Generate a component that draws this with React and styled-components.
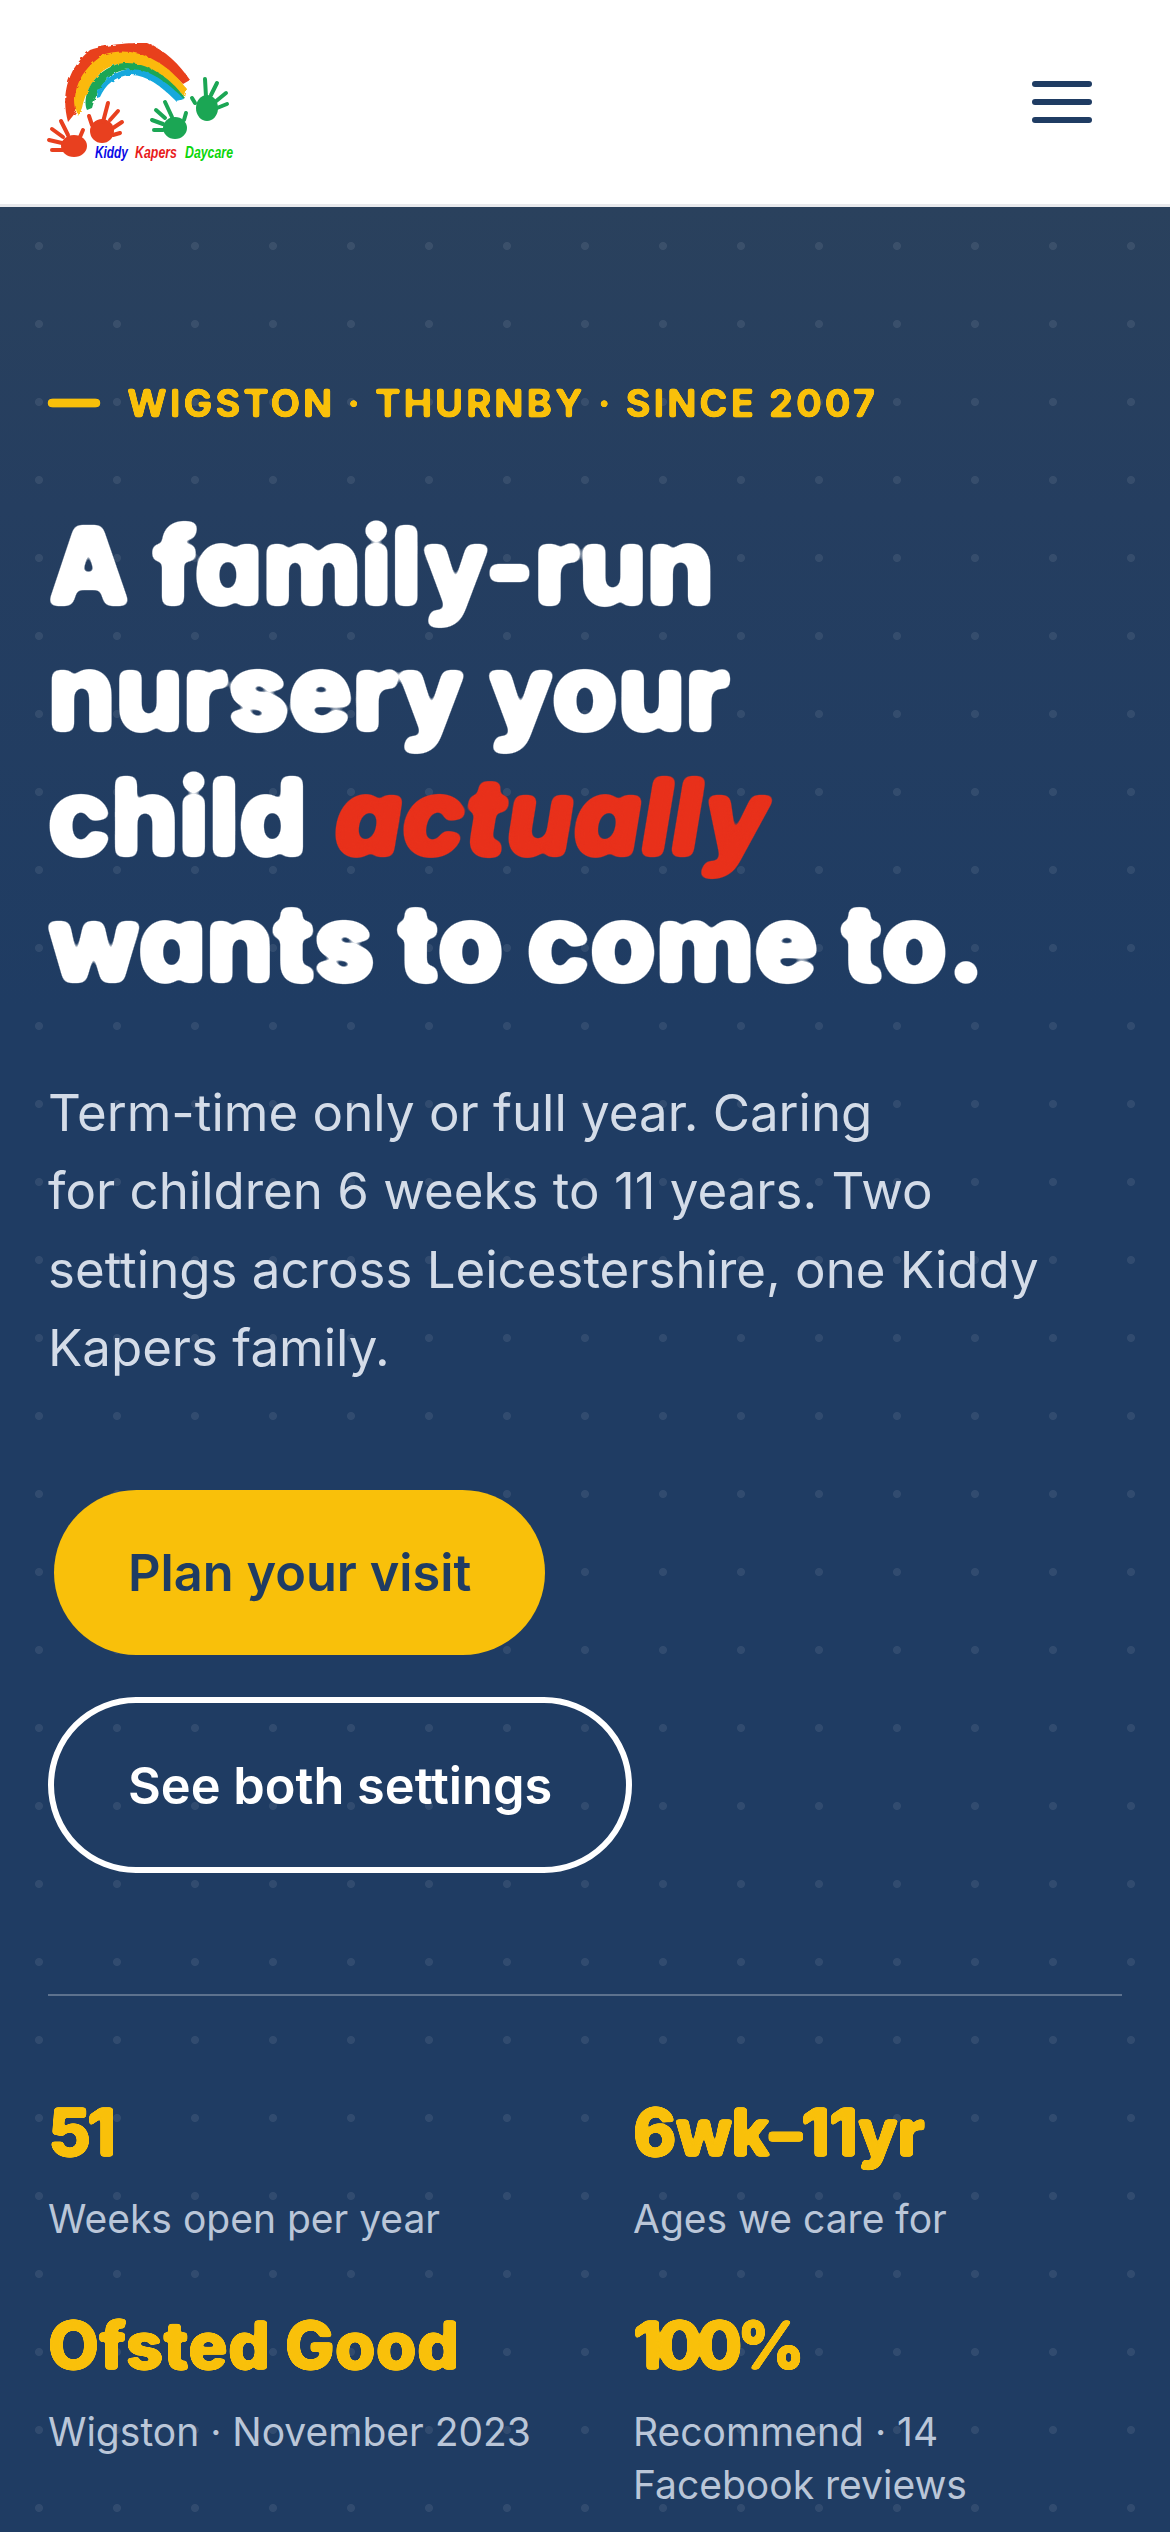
import React from "react";
import styled, { createGlobalStyle } from "styled-components";

const Global = createGlobalStyle`
  html, body { margin: 0; padding: 0; background: #fff; }
  * { box-sizing: border-box; }
  body { font-family: Inter, "Liberation Sans", sans-serif; }
`;
const Page = styled.div`width: 1170px; height: 2532px; overflow: hidden;`;
const Header = styled.header`
  height: 207px; background: #fff; border-bottom: 3px solid #e8e9ec;
  display: flex; align-items: center; justify-content: space-between;
  padding: 0 78px 0 0;
`;
const LogoSvg = styled.svg`width: 240px; height: 204px; display: block;`;
const Burger = styled.button`
  display: flex; flex-direction: column; gap: 12px; padding: 0; border: 0; background: none; width: 60px;
  span { display: block; height: 6px; border-radius: 3px; background: #1f3c63; }
`;
const Hero = styled.section`
  height: 2325px; padding: 173px 48px 0; color: #fff;
  background:
    radial-gradient(circle at center, rgba(255,255,255,.08) 0 3.6px, transparent 4.4px) 0 0 / 78px 78px,
    linear-gradient(180deg, #2a415d 0, #253e60 300px, #1f3c63 800px);
`;
const Eyebrow = styled.div`
  display: flex; align-items: center; gap: 27px; color: #f9c00a;
  filter: url(#roundSmall);
`;
const Dash = styled.span`width: 52px; height: 8px; border-radius: 4px; background: #f9c00a;`;
const EyebrowText = styled.span`
  font-weight: 700; font-size: 38.5px; line-height: 46px; letter-spacing: 2.85px;
  font-feature-settings: "cv11";
`;
const Title = styled.h1`
  margin: 77px 0 0; font-weight: 800; font-size: 106px; line-height: 125.7px; letter-spacing: 0.2px;
  font-feature-settings: "cv11"; filter: url(#roundBig);
  em { font-style: italic; color: #e8301a; padding-left: 4px; }
`;
const Lead = styled.p`
  margin: 68px 0 0; font-size: 51px; font-weight: 400; line-height: 78.4px; color: #d4dce8;
`;
const Actions = styled.div`
  margin-top: 103px; display: flex; flex-direction: column; align-items: flex-start; gap: 42px;
`;
const Primary = styled.a`
  margin-left: 6px; height: 165px; padding: 0 74px; border-radius: 83px; background: #f9c00a; color: #1f3c63;
  display: flex; align-items: center; font-size: 50.5px; font-weight: 600;
`;
const Secondary = styled.a`
  height: 176px; padding: 0 74px; border-radius: 88px; border: 6px solid #fff; color: #fff;
  display: flex; align-items: center; font-size: 50.5px; font-weight: 600;
`;
const Rule = styled.hr`margin: 121px 0 0; border: 0; height: 2px; background: rgba(255,255,255,.28);`;
const Stats = styled.div`
  margin-top: 94px; display: grid; grid-template-columns: 489px 489px; column-gap: 96px; row-gap: 58px;
`;
const Value = styled.div`
  font-weight: 800; font-size: 66px; line-height: 84px; letter-spacing: ${(p) => p.$track}px; color: #f9c00a;
  font-feature-settings: "cv11"; filter: url(#roundMid);
`;
const Label = styled.div`
  margin-top: 18px; font-size: 39px; line-height: 53px; color: #bac6d8;
`;

const hands = [
  { c: "#e8401f", palm: [74, 146, 13, 11], f: [[68,135,61,121],[63,137,52,129],[62,143,49,140],[63,150,52,150],[80,137,83,130]] },
  { c: "#e8401f", palm: [102, 131, 12, 12], f: [[103,122,108,103],[110,120,118,111],[113,128,122,122],[113,135,120,133],[92,125,89,116]] },
  { c: "#1ba654", palm: [175, 128, 12, 11], f: [[172,117,165,102],[165,118,156,110],[163,124,152,120],[163,130,154,130],[184,120,186,113]] },
  { c: "#1ba654", palm: [207, 108, 11, 13], f: [[206,97,205,79],[211,95,217,83],[215,102,226,93],[217,108,227,104],[195,103,192,98]] },
];

const Logo = () => (
  <LogoSvg viewBox="0 0 240 204" aria-label="Kiddy Kapers Daycare">
    <defs>
      <filter id="rough" x="-5%" y="-5%" width="110%" height="110%">
        <feTurbulence type="fractalNoise" baseFrequency="0.18" numOctaves="2" seed="4" />
        <feDisplacementMap in="SourceGraphic" scale="3.5" />
      </filter>
    </defs>
    <g filter="url(#rough)">
      <path d="M68 122C62 100 64 72 90 50C110 43 135 43 147 43C165 50 180 65 190 80L183 84C160 60 135 50 108 58C92 64 76 85 76 112Z" fill="#e8401f" />
      <path d="M78 116C70 95 78 70 105 54C130 46 162 56 186 88L184 96C160 72 130 58 112 66C96 72 86 90 82 108Z" fill="#fbb90f" />
      <path d="M87 110C82 98 90 75 115 65C135 58 165 70 185 98L180 100C165 85 145 68 125 70C108 72 98 88 92 108Z" fill="#1ba654" />
      <path d="M97 98C97 88 108 74 125 70C145 66 165 80 184 99L176 101C160 85 145 74 130 75C115 76 105 85 100 97Z" fill="#12a8dd" />
    </g>
    {hands.map((h, i) => (
      <g key={i} fill={h.c} stroke={h.c} strokeLinecap="round">
        <ellipse cx={h.palm[0]} cy={h.palm[1]} rx={h.palm[2]} ry={h.palm[3]} strokeWidth="0" />
        {h.f.map((l, j) => <line key={j} x1={l[0]} y1={l[1]} x2={l[2]} y2={l[3]} strokeWidth="4" />)}
      </g>
    ))}
    <g transform="scale(1 1.35)" fontFamily="'Liberation Sans', sans-serif" fontWeight="700" fontStyle="italic" fontSize="12.5">
      <text x="95" y="117" fill="#0a0ae6" textLength="33" lengthAdjust="spacingAndGlyphs">Kiddy</text>
      <text x="135" y="117" fill="#e81c1c" textLength="42" lengthAdjust="spacingAndGlyphs">Kapers</text>
      <text x="185" y="117" fill="#0cd60c" textLength="48" lengthAdjust="spacingAndGlyphs">Daycare</text>
    </g>
  </LogoSvg>
);

const RoundFilter = ({ id, blur, a, b }) => (
  <filter id={id} x="-5%" y="-15%" width="110%" height="130%" colorInterpolationFilters="sRGB">
    <feGaussianBlur stdDeviation={blur} />
    <feColorMatrix type="matrix" values={`1 0 0 0 0  0 1 0 0 0  0 0 1 0 0  0 0 0 ${a} ${b}`} />
  </filter>
);
const Filters = styled.svg`position: absolute; width: 0; height: 0;`;

const stats = [
  ["51", "Weeks open per year", -4],
  ["6wk–11yr", "Ages we care for", -1.2],
  ["Ofsted Good", "Wigston · November 2023", 0.2],
  ["100%", "Recommend · 14 Facebook reviews", -5.5],
];

export default function App() {
  return (
    <Page>
      <Global />
      <Filters aria-hidden="true">
        <RoundFilter id="roundBig" blur="3.5" a="9" b="-2" />
        <RoundFilter id="roundMid" blur="1.8" a="8" b="-2" />
        <RoundFilter id="roundSmall" blur="1" a="5" b="-1.3" />
      </Filters>
      <Header>
        <Logo />
        <Burger aria-label="Menu"><span /><span /><span /></Burger>
      </Header>
      <Hero>
        <Eyebrow><Dash /><EyebrowText>WIGSTON · THURNBY · SINCE 2007</EyebrowText></Eyebrow>
        <Title>A family-run<br />nursery your<br />child <em>actually</em><br />wants to come to.</Title>
        <Lead>Term-time only or full year. Caring<br />for children 6 weeks to 11 years. Two<br />settings across Leicestershire, one Kiddy<br />Kapers family.</Lead>
        <Actions>
          <Primary>Plan your visit</Primary>
          <Secondary>See both settings</Secondary>
        </Actions>
        <Rule />
        <Stats>
          {stats.map(([v, l, t]) => (
            <div key={v}><Value $track={t}>{v}</Value><Label>{l}</Label></div>
          ))}
        </Stats>
      </Hero>
    </Page>
  );
}
